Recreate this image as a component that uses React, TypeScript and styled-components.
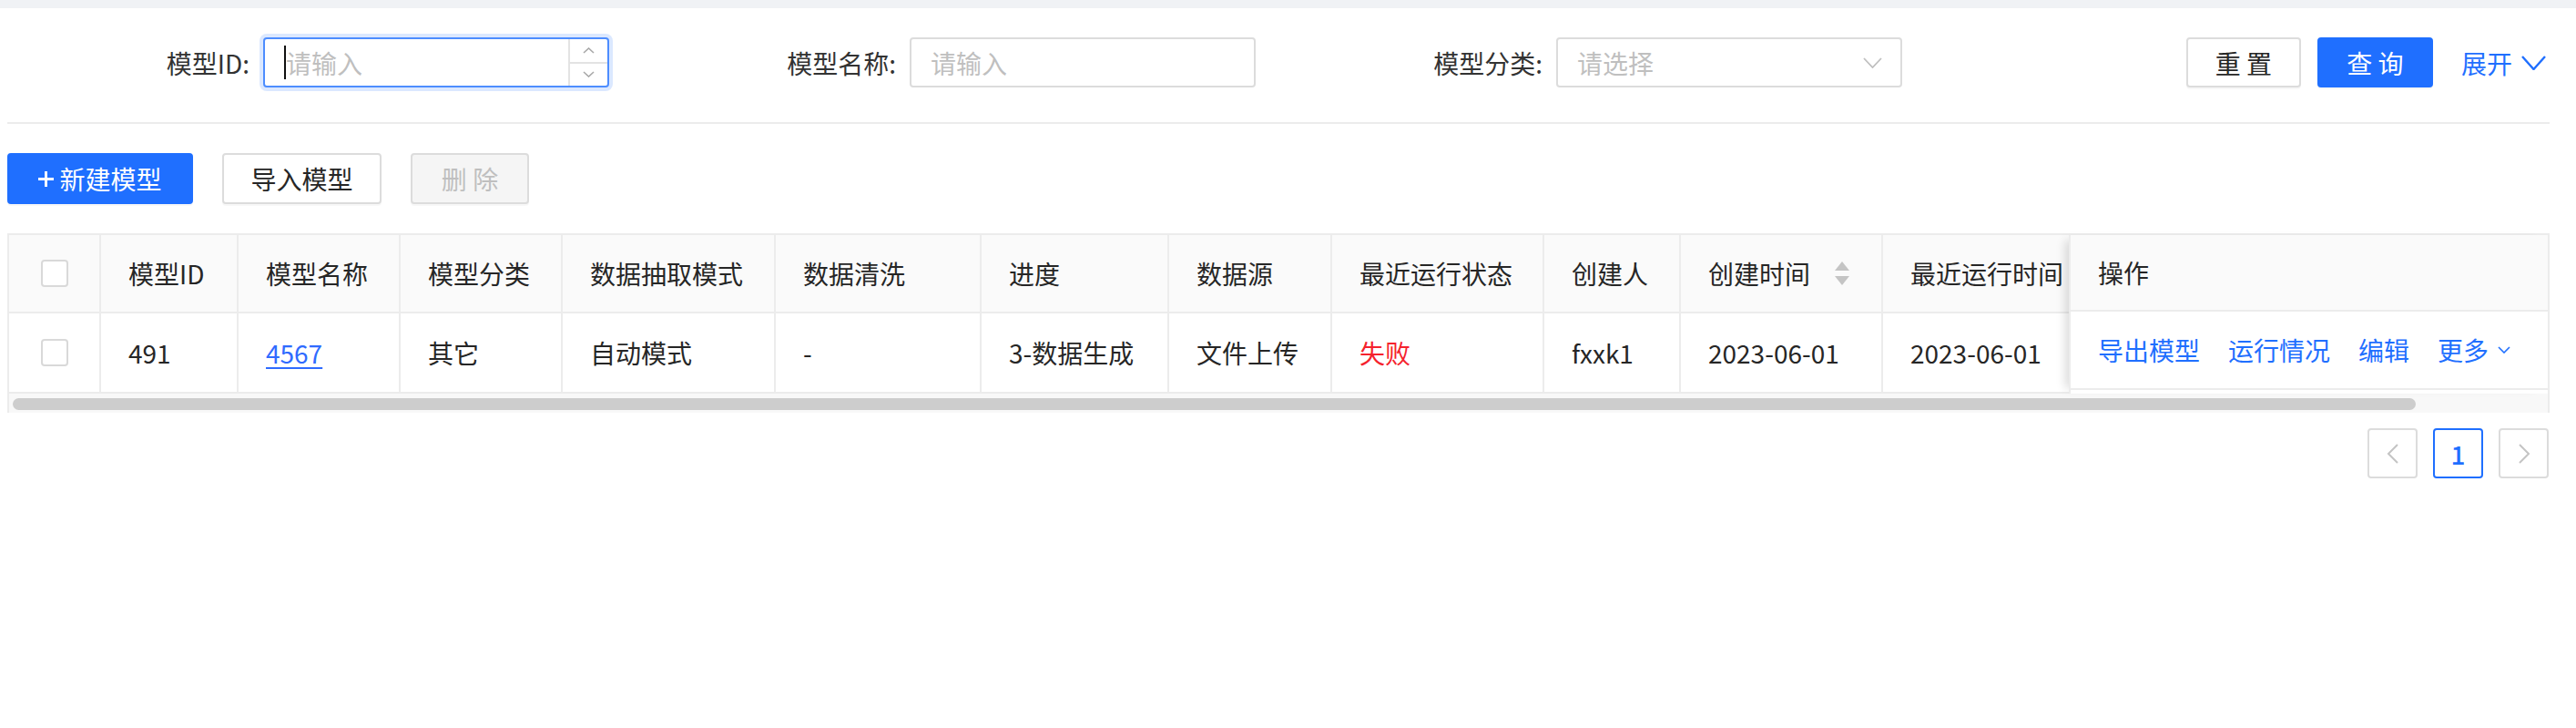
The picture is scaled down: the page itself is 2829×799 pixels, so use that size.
import React from "react";
import styled, { createGlobalStyle } from "styled-components";

const Global = createGlobalStyle`
  html, body { margin: 0; padding: 0; background: #fff; }
  body {
    font-family: "Noto Sans CJK SC", "Noto Sans", "Liberation Sans", sans-serif;
    font-size: 28px;
    color: #262626;
  }
  * { box-sizing: border-box; }
`;

const BLUE = "#1f6fff";
const LINE = "#ececec";

const Page = styled.div`
  width: 2829px;
  min-height: 799px;
  background: #fff;
`;

const TopBar = styled.div`
  height: 9px;
  background: #f0f2f5;
`;

const Content = styled.div`
  width: 2800px;
  padding-left: 8px;
`;

const FilterBar = styled.div`
  display: flex;
  align-items: center;
  padding: 32px 4px 38px 0;
  border-bottom: 2px solid ${LINE};
`;

const FormItem = styled.div`
  width: 710px;
  display: flex;
  align-items: center;
  flex-shrink: 0;
`;

const Label = styled.label`
  width: 281px;
  padding-right: 15px;
  text-align: right;
  white-space: nowrap;
  line-height: 1;
  color: #333;
`;

const Field = styled.div<{ $focused?: boolean }>`
  width: 380px;
  height: 55px;
  display: flex;
  align-items: stretch;
  border: 2px solid ${(p) => (p.$focused ? "#4d8dff" : "#dcdcdc")};
  border-radius: 4px;
  background: #fff;
  box-shadow: ${(p) => (p.$focused ? "0 0 0 4px rgba(31,111,255,0.16)" : "none")};
  overflow: hidden;
`;

const FieldText = styled.div`
  flex: 1;
  display: flex;
  align-items: center;
  padding-left: 21px;
  color: #bfbfbf;
  white-space: nowrap;
  line-height: 1;
`;

const Caret = styled.span`
  width: 2px;
  height: 37px;
  background: #111;
`;

const Spinner = styled.div`
  width: 43px;
  display: flex;
  flex-direction: column;
  border-left: 2px solid #e3e3e3;
`;

const SpinHalf = styled.div<{ $top?: boolean }>`
  flex: 1;
  display: flex;
  align-items: center;
  justify-content: center;
  border-bottom: ${(p) => (p.$top ? "2px solid #e3e3e3" : "none")};
`;

const SelectArrow = styled.div`
  display: flex;
  align-items: center;
  padding-right: 20px;
`;

const Actions = styled.div`
  margin-left: auto;
  display: flex;
  align-items: center;
  gap: 18px;
`;

const Button = styled.button<{ $variant?: "primary" | "default" | "disabled"; $w: number; $h?: number }>`
  width: ${(p) => p.$w}px;
  height: ${(p) => p.$h ?? 55}px;
  padding: 0;
  display: inline-flex;
  align-items: center;
  justify-content: center;
  gap: 6px;
  font-family: inherit;
  font-size: 28px;
  line-height: 1;
  border-radius: 4px;
  white-space: nowrap;
  border: 2px solid ${(p) => (p.$variant === "primary" ? BLUE : "#dcdcdc")};
  background: ${(p) =>
    p.$variant === "primary" ? BLUE : p.$variant === "disabled" ? "#f5f5f5" : "#fff"};
  color: ${(p) =>
    p.$variant === "primary" ? "#fff" : p.$variant === "disabled" ? "#bfbfbf" : "#262626"};
  box-shadow: 0 2px 0 rgba(0, 0, 0, 0.03);
`;

const ExpandLink = styled.span`
  margin-left: 13px;
  display: inline-flex;
  align-items: center;
  gap: 10px;
  color: ${BLUE};
  line-height: 1;
  white-space: nowrap;
`;

const Toolbar = styled.div`
  display: flex;
  align-items: center;
  gap: 32px;
  margin-top: 32px;
`;

const TableFrame = styled.div`
  margin-top: 32px;
  width: 2792px;
  border: 2px solid ${LINE};
  border-bottom: none;
`;

const TableBody = styled.div`
  display: flex;
`;

const ScrollPane = styled.div`
  flex: 1;
  overflow: hidden;
`;

const Row = styled.div<{ $head?: boolean }>`
  display: flex;
  width: max-content;
  border-bottom: 2px solid ${LINE};
  background: ${(p) => (p.$head ? "#fafafa" : "#fff")};
`;

const Cell = styled.div<{ $w?: number; $head?: boolean; $center?: boolean }>`
  width: ${(p) => (p.$w ? `${p.$w}px` : "auto")};
  flex-shrink: 0;
  height: ${(p) => (p.$head ? 84 : 86)}px;
  display: flex;
  align-items: center;
  justify-content: ${(p) => (p.$center ? "center" : "space-between")};
  padding: ${(p) => (p.$center ? "0" : "0 35px 0 30px")};
  border-right: 2px solid ${LINE};
  white-space: nowrap;
  line-height: 1;
  color: #262626;
`;

const FixedPane = styled.div`
  width: 526px;
  flex-shrink: 0;
  position: relative;
  z-index: 1;
  border-left: 2px solid ${LINE};
  box-shadow: -10px 0 10px -6px rgba(0, 0, 0, 0.14);
  background: #fff;
`;

const FixedCell = styled.div<{ $head?: boolean }>`
  height: ${(p) => (p.$head ? 84 : 86)}px;
  display: flex;
  align-items: center;
  gap: 31px;
  padding-left: 30px;
  border-bottom: 2px solid ${LINE};
  background: ${(p) => (p.$head ? "#fafafa" : "#fff")};
  white-space: nowrap;
  line-height: 1;
`;

const OpLink = styled.a`
  color: ${BLUE};
  text-decoration: none;
  display: inline-flex;
  align-items: center;
  gap: 10px;
`;

const NameLink = styled.a`
  color: #2f6bff;
  text-decoration: underline;
  text-underline-offset: 4px;
`;

const Failed = styled.span`
  color: #f5222d;
`;

const Checkbox = styled.span`
  width: 30px;
  height: 30px;
  border: 2px solid #d9d9d9;
  border-radius: 4px;
  background: #fff;
`;

const ScrollTrack = styled.div`
  height: 21px;
  background: #f8f8f8;
  padding: 5px 0 0 4px;
`;

const ScrollThumb = styled.div`
  width: 2639px;
  height: 13px;
  border-radius: 7px;
  background: #cdcdcd;
`;

const Pagination = styled.div`
  display: flex;
  justify-content: flex-end;
  gap: 17px;
  margin-top: 17px;
  padding-right: 1px;
`;

const PageItem = styled.div<{ $active?: boolean }>`
  width: 55px;
  height: 55px;
  border: 2px solid ${(p) => (p.$active ? BLUE : "#dcdcdc")};
  border-radius: 4px;
  display: flex;
  align-items: center;
  justify-content: center;
  color: ${(p) => (p.$active ? BLUE : "#bfbfbf")};
  font-size: 28px;
  line-height: 1;
  font-weight: 500;
`;

const Chevron = ({ w, h, color, sw = 2 }: { w: number; h: number; color: string; sw?: number }) => (
  <svg width={w} height={h} viewBox={`0 0 ${w} ${h}`} fill="none">
    <polyline points={`1,1 ${w / 2},${h - 1} ${w - 1},1`} stroke={color} strokeWidth={sw} />
  </svg>
);

const ChevronUp = ({ w, h, color }: { w: number; h: number; color: string }) => (
  <svg width={w} height={h} viewBox={`0 0 ${w} ${h}`} fill="none">
    <polyline points={`1,${h - 1} ${w / 2},1 ${w - 1},${h - 1}`} stroke={color} strokeWidth={1.6} />
  </svg>
);

const SideChevron = ({ dir }: { dir: "left" | "right" }) => (
  <svg width="14" height="22" viewBox="0 0 14 22" fill="none">
    <polyline
      points={dir === "left" ? "12,1 2,11 12,21" : "2,1 12,11 2,21"}
      stroke="#c4c4c4"
      strokeWidth="2"
    />
  </svg>
);

const SortIcon = () => (
  <svg width="16" height="27" viewBox="0 0 16 27">
    <polygon points="8,0 16,10 0,10" fill="#c4c4c4" />
    <polygon points="0,16 16,16 8,26" fill="#c4c4c4" />
  </svg>
);

const PlusIcon = () => (
  <svg width="17" height="17" viewBox="0 0 17 17">
    <rect x="7" y="0" width="3" height="17" fill="#fff" />
    <rect x="0" y="7" width="17" height="3" fill="#fff" />
  </svg>
);

type Col = { title: string; w: number; value: React.ReactNode; sort?: boolean };

const columns: Col[] = [
  { title: "模型ID", w: 151, value: "491" },
  { title: "模型名称", w: 178, value: <NameLink>4567</NameLink> },
  { title: "模型分类", w: 178, value: "其它" },
  { title: "数据抽取模式", w: 234, value: "自动模式" },
  { title: "数据清洗", w: 226, value: "-" },
  { title: "进度", w: 206, value: "3-数据生成" },
  { title: "数据源", w: 179, value: "文件上传" },
  { title: "最近运行状态", w: 233, value: <Failed>失败</Failed> },
  { title: "创建人", w: 150, value: "fxxk1" },
  { title: "创建时间", w: 222, value: "2023-06-01", sort: true },
  { title: "最近运行时间", w: 353, value: "2023-06-01" },
];

export default function App() {
  return (
    <Page>
      <Global />
      <TopBar />
      <Content>
        <FilterBar>
          <FormItem>
            <Label>模型ID:</Label>
            <Field $focused>
              <FieldText>
                <Caret />
                请输入
              </FieldText>
              <Spinner>
                <SpinHalf $top>
                  <ChevronUp w={13} h={7} color="#a8a8a8" />
                </SpinHalf>
                <SpinHalf>
                  <Chevron w={13} h={7} color="#a8a8a8" sw={1.6} />
                </SpinHalf>
              </Spinner>
            </Field>
          </FormItem>
          <FormItem>
            <Label>模型名称:</Label>
            <Field>
              <FieldText>请输入</FieldText>
            </Field>
          </FormItem>
          <FormItem>
            <Label>模型分类:</Label>
            <Field>
              <FieldText>请选择</FieldText>
              <SelectArrow>
                <Chevron w={21} h={12} color="#bfbfbf" sw={1.8} />
              </SelectArrow>
            </Field>
          </FormItem>
          <Actions>
            <Button $w={126}>重 置</Button>
            <Button $w={127} $variant="primary">查 询</Button>
            <ExpandLink>
              展开
              <Chevron w={27} h={16} color={BLUE} sw={2.4} />
            </ExpandLink>
          </Actions>
        </FilterBar>

        <Toolbar>
          <Button $w={204} $h={56} $variant="primary">
            <PlusIcon />
            新建模型
          </Button>
          <Button $w={175} $h={56}>导入模型</Button>
          <Button $w={130} $h={56} $variant="disabled">删 除</Button>
        </Toolbar>

        <TableFrame>
          <TableBody>
            <ScrollPane>
              <Row $head>
                <Cell $w={101} $head $center>
                  <Checkbox />
                </Cell>
                {columns.map((c) => (
                  <Cell key={c.title} $w={c.w} $head>
                    <span>{c.title}</span>
                    {c.sort && <SortIcon />}
                  </Cell>
                ))}
              </Row>
              <Row>
                <Cell $w={101} $center>
                  <Checkbox />
                </Cell>
                {columns.map((c) => (
                  <Cell key={c.title} $w={c.w}>
                    <span>{c.value}</span>
                  </Cell>
                ))}
              </Row>
            </ScrollPane>
            <FixedPane>
              <FixedCell $head>操作</FixedCell>
              <FixedCell>
                <OpLink>导出模型</OpLink>
                <OpLink>运行情况</OpLink>
                <OpLink>编辑</OpLink>
                <OpLink>
                  更多
                  <Chevron w={14} h={8} color={BLUE} sw={1.6} />
                </OpLink>
              </FixedCell>
            </FixedPane>
          </TableBody>
          <ScrollTrack>
            <ScrollThumb />
          </ScrollTrack>
        </TableFrame>

        <Pagination>
          <PageItem>
            <SideChevron dir="left" />
          </PageItem>
          <PageItem $active>1</PageItem>
          <PageItem>
            <SideChevron dir="right" />
          </PageItem>
        </Pagination>
      </Content>
    </Page>
  );
}
